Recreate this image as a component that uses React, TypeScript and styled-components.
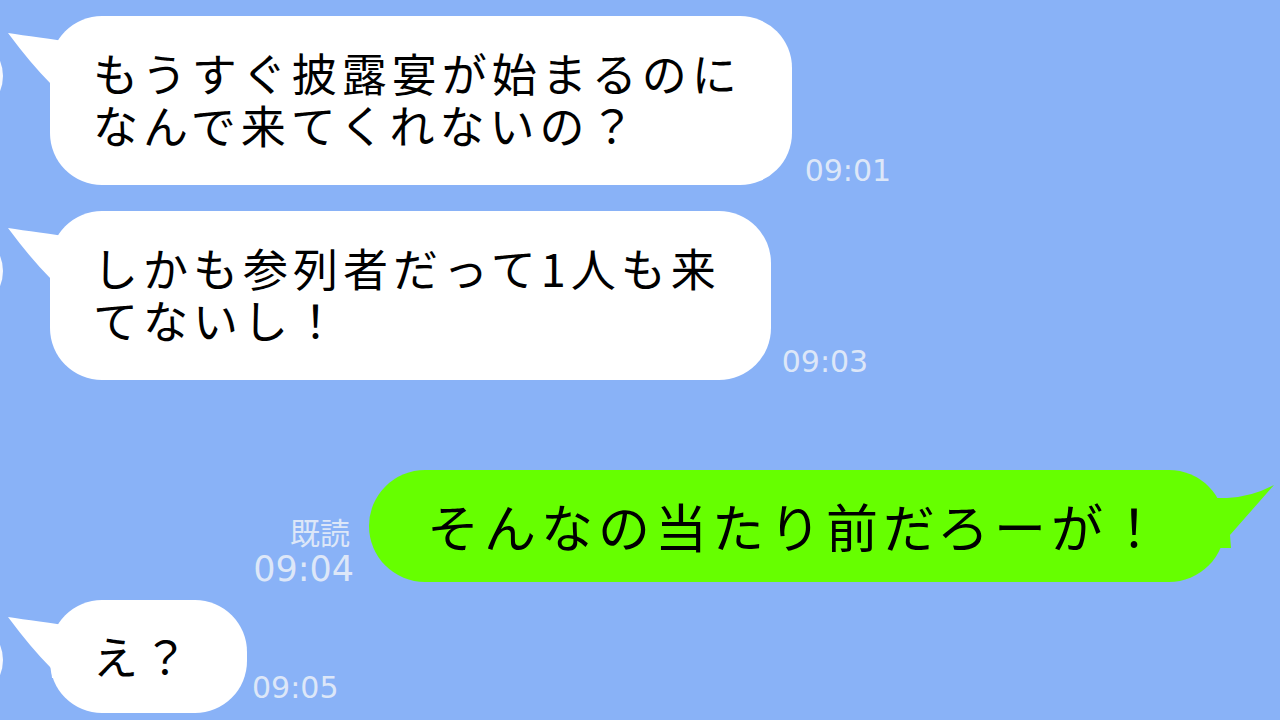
import React from 'react';
import styled, { createGlobalStyle } from 'styled-components';

const GlobalStyle = createGlobalStyle`
  html, body {
    margin: 0;
    padding: 0;
    background: #89b2f7;
    overflow: hidden;
  }
  #root {
    width: 1280px;
    height: 720px;
  }
`;

const Chat = styled.main`
  width: 1280px;
  height: 720px;
  box-sizing: border-box;
  padding-top: 16px;
  display: flex;
  flex-direction: column;
  font-family: 'Noto Sans CJK JP', 'Noto Sans', sans-serif;
`;

const Row = styled.div<{ $top: number; $mine?: boolean }>`
  display: flex;
  align-items: flex-end;
  justify-content: ${({ $mine }) => ($mine ? 'flex-end' : 'flex-start')};
  margin-top: ${({ $top }) => $top}px;
  padding-right: ${({ $mine }) => ($mine ? '55px' : '0')};
`;

const Avatar = styled.div`
  width: 80px;
  height: 80px;
  border-radius: 50%;
  background: #f7f9fe;
  margin-left: -77px;
  margin-top: 20px;
  align-self: flex-start;
  flex-shrink: 0;
`;

const Bubble = styled.div<{ $mine?: boolean; $short?: boolean }>`
  position: relative;
  box-sizing: border-box;
  background: ${({ $mine }) => ($mine ? '#66ff00' : '#ffffff')};
  color: #000;
  border-radius: ${({ $mine }) => ($mine ? '56px' : '52px')};
  margin-left: ${({ $mine }) => ($mine ? '0' : '47px')};
  padding: ${({ $mine, $short }) =>
    $mine ? '30px 60px 30px 58px' : $short ? '30px 54px 31px 43px' : '31px 50px 34px 43px'};
  font-size: ${({ $mine }) => ($mine ? '52px' : '45px')};
  letter-spacing: 5px;
  line-height: 52px;
  white-space: nowrap;
`;

const Tail = styled.svg<{ $mine?: boolean }>`
  position: absolute;
  top: 0;
  width: 80px;
  height: 80px;
  ${({ $mine }) => ($mine ? 'right: -52px;' : 'left: -45px;')}
`;

const Meta = styled.div<{ $mine?: boolean; $size: number; $gap: number; $drop: number }>`
  display: flex;
  flex-direction: column;
  align-items: flex-end;
  font-family: 'DejaVu Sans', 'Noto Sans CJK JP', sans-serif;
  font-size: ${({ $size }) => $size}px;
  line-height: 1.1;
  color: #dde7f8;
  margin: ${({ $mine, $gap }) => ($mine ? `0 ${$gap}px 0 0` : `0 0 0 ${$gap}px`)};
  margin-bottom: ${({ $drop }) => $drop}px;
`;

const Read = styled.span`
  font-family: 'Noto Sans CJK JP', sans-serif;
  font-size: 30px;
  line-height: 38px;
  padding-right: 4px;
`;

function LeftTail() {
  return (
    <Tail viewBox="0 0 80 80">
      <path d="M3 17 Q30 21 75 27 L75 78 L47 78 L46 68 Q26 48 3 17 Z" fill="#ffffff" />
    </Tail>
  );
}

function RightTail() {
  return (
    <Tail $mine viewBox="0 0 80 80">
      <path d="M77 15 Q55 27 30 28 L0 28 L0 78 L34 78 L33 65 Q55 40 77 15 Z" fill="#66ff00" />
    </Tail>
  );
}

type Msg = {
  lines: string[];
  time: string;
  top: number;
  gap: number;
  drop: number;
};

const incoming: Msg[] = [
  { lines: ['もうすぐ披露宴が始まるのに', 'なんで来てくれないの？'], time: '09:01', top: 0, gap: 13, drop: -2 },
  { lines: ['しかも参列者だって1人も来', 'てないし！'], time: '09:03', top: 26, gap: 11, drop: 2 },
];

export default function App(): JSX.Element {
  return (
    <>
      <GlobalStyle />
      <Chat>
        {incoming.map((m) => (
          <Row key={m.time} $top={m.top}>
            <Avatar />
            <Bubble>
              <LeftTail />
              {m.lines.map((l) => (
                <div key={l}>{l}</div>
              ))}
            </Bubble>
            <Meta $size={30} $gap={m.gap} $drop={m.drop}>
              {m.time}
            </Meta>
          </Row>
        ))}

        <Row $top={90} $mine>
          <Meta $mine $size={35} $gap={15} $drop={-6}>
            <Read>既読</Read>
            <span>09:04</span>
          </Meta>
          <Bubble $mine>
            <RightTail />
            そんなの当たり前だろーが！
          </Bubble>
        </Row>

        <Row $top={18}>
          <Avatar />
          <Bubble $short>
            <LeftTail />
            え？
          </Bubble>
          <Meta $size={30} $gap={5} $drop={9}>
            09:05
          </Meta>
        </Row>
      </Chat>
    </>
  );
}
